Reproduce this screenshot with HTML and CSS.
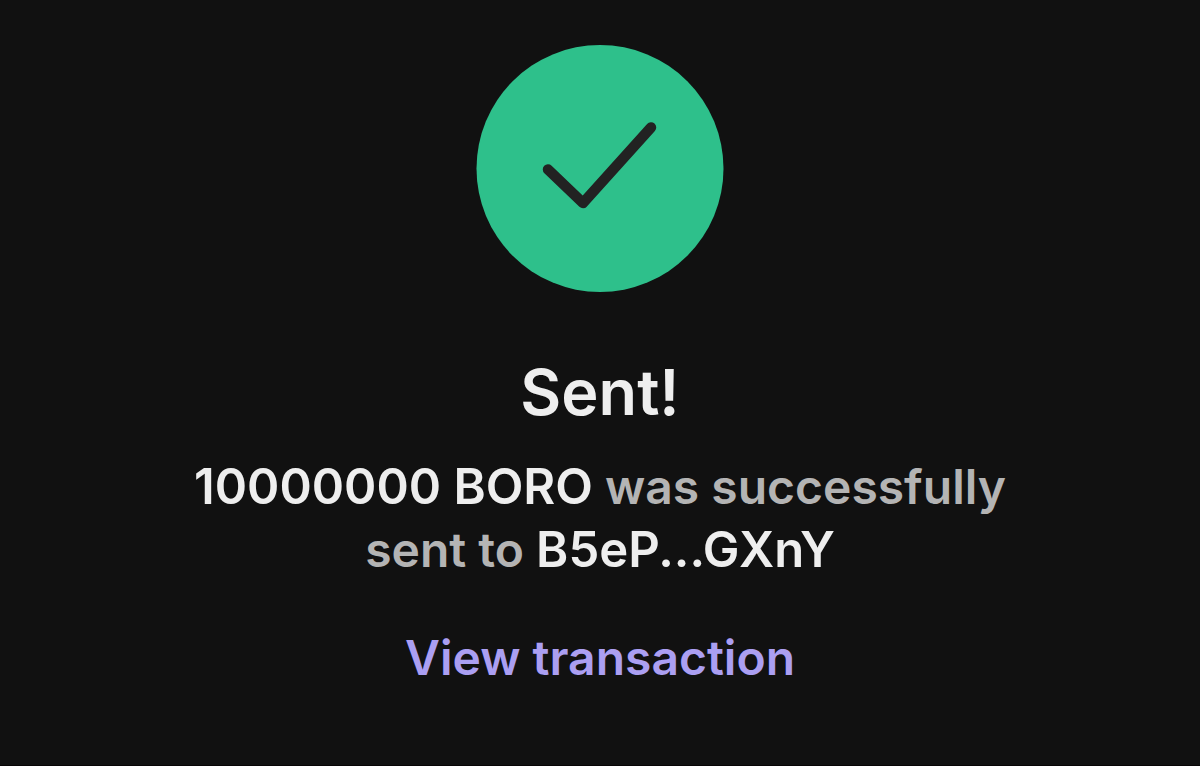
FILE: index.html
```
<!DOCTYPE html>
<html lang="en">

<head>
  <meta charset="UTF-8">
  <meta name="viewport" content="width=device-width, initial-scale=1.0">
  <title>Sent</title>
  <link rel="stylesheet" href="styles.css">
</head>

<body>
  <main class="result">
    <svg class="result-icon" viewBox="0 0 248 248" aria-hidden="true">
      <circle cx="124" cy="123.500" r="123.500" fill="#2ec08b" />
      <path d="M72 124.500L107 158L175 82.500" fill="none" stroke="#222" stroke-width="10.500" stroke-linecap="round" stroke-linejoin="round" />
    </svg>
    <h1 class="result-title">Sent!</h1>
    <p class="result-text"><strong>10000000 BORO</strong> was successfully sent to <strong>B5eP...GXnY</strong></p>
    <a class="result-link" href="#">View transaction</a>
  </main>
</body>

</html>
```
FILE: styles.css
```
* {
  box-sizing: border-box;
  margin: 0;
  padding: 0;
}

body {
  min-height: 100vh;
  background: #111;
  border-bottom: 1px solid #080506;
  font-family: Inter, sans-serif;
}

.result {
  display: flex;
  flex-direction: column;
  align-items: center;
  padding: 45px 24px;
  text-align: center;
}

.result-icon {
  width: 248px;
  height: 248px;
}

.result-title {
  margin-top: 59px;
  color: #eee;
  font-size: 63px;
  font-weight: 600;
  line-height: 80px;
}

.result-text {
  max-width: 880px;
  margin-top: 23px;
  color: #b4b4b4;
  font-size: 48px;
  font-weight: 600;
  line-height: 63px;
}

.result-text strong {
  color: #eee;
  font-size: 49px;
  font-weight: 600;
}

.result-link {
  margin-top: 45px;
  color: #ab9ff2;
  font-size: 48px;
  font-weight: 600;
  line-height: 64px;
  text-decoration: none;
}
```
